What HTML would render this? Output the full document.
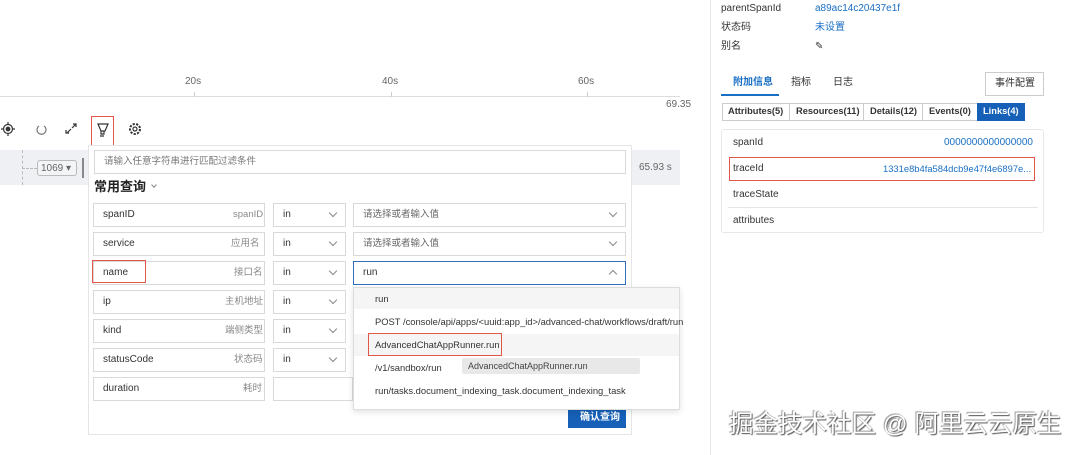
<!DOCTYPE html>
<html><head><meta charset="utf-8"><style>
*{box-sizing:border-box;margin:0;padding:0}
body{width:1080px;height:455px;position:relative;overflow:hidden;background:#fff;font-family:"Liberation Sans","Noto Sans CJK SC",sans-serif;font-size:10px;color:#333}
.a{position:absolute}
.t{position:absolute;white-space:nowrap;line-height:1}
.box{position:absolute;border:1px solid #d9d9d9;background:#fff}
.chev{position:absolute;width:6px;height:6px;border-right:1px solid #888;border-bottom:1px solid #888;transform:rotate(45deg)}
.blue{color:#1a6fc4}
.red{position:absolute;border:1.5px solid #e0574a}
.dd{font-size:9.4px}
</style></head><body>
<!-- timeline -->
<div class="a" style="left:0;top:96px;width:680px;height:1px;background:#ddd"></div>
<div class="a" style="left:194px;top:92px;width:1px;height:5px;background:#ccc"></div>
<div class="a" style="left:391px;top:92px;width:1px;height:5px;background:#ccc"></div>
<div class="a" style="left:587px;top:92px;width:1px;height:5px;background:#ccc"></div>
<div class="t" style="left:185px;top:77px;color:#666">20s</div>
<div class="t" style="left:382px;top:77px;color:#666">40s</div>
<div class="t" style="left:578px;top:77px;color:#666">60s</div>
<div class="t" style="left:666px;top:100px;color:#666">69.35</div>
<!-- icons -->
<svg class="a" style="left:0;top:120px" width="150" height="20" viewBox="0 0 150 20" fill="none" stroke="#333" stroke-width="1.2">
<circle cx="8" cy="9" r="4.5"/><circle cx="8" cy="9" r="1.8" fill="#333"/><path d="M8 2v2.5M8 13.5V16M1 9h2.5M12.5 9H15"/>
<path d="M44 6a4.5 4.5 0 1 1-5 0" stroke="#777"/>
<path d="M67 13l4-4M72 8l4-4M73 4h3v3M66 10v3h3"/>
<path d="M98 4h10l-3 7h-4z M101 11v3h3v-3 M100 16h4"/>
<circle cx="135" cy="9" r="2"/><circle cx="135" cy="9" r="5" stroke-dasharray="2.2 1.3" stroke-width="2"/>
</svg>
<div class="red" style="left:91px;top:116px;width:23px;height:31px"></div>
<!-- gray row -->
<div class="a" style="left:0;top:150px;width:680px;height:35px;background:#eef0f3"></div>
<div class="a" style="left:22px;top:150px;width:1px;height:35px;border-left:1px dashed #bbb"></div>
<div class="a" style="left:22px;top:168px;width:15px;height:1px;border-top:1px dashed #bbb"></div>
<div class="a" style="left:37px;top:160px;width:40px;height:16px;border:1px solid #bbb;border-radius:3px;background:#f3f4f6"></div>
<div class="t" style="left:41px;top:164px;color:#666">1069 ▾</div>
<div class="a" style="left:82px;top:158px;width:2px;height:20px;background:#888"></div>
<div class="t" style="left:639px;top:163px;color:#666">65.93 s</div>
<!-- popup -->
<div class="a" style="left:88px;top:145px;width:544px;height:290px;background:#fff;border:1px solid #e5e5e5"></div>
<div class="box" style="left:94px;top:150px;width:532px;height:24px"></div>
<div class="t" style="left:104px;top:157px;color:#777;font-size:9.5px">请输入任意字符串进行匹配过滤条件</div>
<div class="t" style="left:94px;top:180px;font-size:13px;font-weight:bold;color:#222">常用查询</div>
<div class="chev" style="left:152px;top:183px;width:4px;height:4px"></div>

<div class="box" style="left:93px;top:203px;width:172px;height:24px"></div><div class="t" style="left:103px;top:210px">spanID</div><div class="t" style="left:233px;top:210px;color:#888;font-size:9.5px">spanID</div>
<div class="box" style="left:93px;top:232px;width:172px;height:24px"></div><div class="t" style="left:103px;top:239px">service</div><div class="t" style="left:231px;top:239px;color:#888;font-size:9.5px">应用名</div>
<div class="box" style="left:93px;top:261px;width:172px;height:24px"></div><div class="t" style="left:103px;top:268px">name</div><div class="t" style="left:234px;top:268px;color:#888;font-size:9.5px">接口名</div>
<div class="box" style="left:93px;top:290px;width:172px;height:24px"></div><div class="t" style="left:225px;top:297px;color:#888;font-size:9.5px">主机地址</div><div class="t" style="left:103px;top:297px">ip</div>
<div class="box" style="left:93px;top:319px;width:172px;height:24px"></div><div class="t" style="left:225px;top:326px;color:#888;font-size:9.5px">端侧类型</div><div class="t" style="left:103px;top:326px">kind</div>
<div class="box" style="left:93px;top:348px;width:172px;height:24px"></div><div class="t" style="left:103px;top:355px">statusCode</div><div class="t" style="left:234px;top:355px;color:#888;font-size:9.5px">状态码</div>
<div class="box" style="left:93px;top:377px;width:172px;height:24px"></div><div class="t" style="left:103px;top:384px">duration</div><div class="t" style="left:243px;top:384px;color:#888;font-size:9.5px">耗时</div>
<div class="red" style="left:92px;top:260px;width:54px;height:23px"></div>

<div class="box" style="left:273px;top:203px;width:73px;height:24px"></div><div class="t" style="left:283px;top:210px">in</div><div class="chev" style="left:330px;top:210px"></div>
<div class="box" style="left:273px;top:232px;width:73px;height:24px"></div><div class="t" style="left:283px;top:239px">in</div><div class="chev" style="left:330px;top:239px"></div>
<div class="box" style="left:273px;top:261px;width:73px;height:24px"></div><div class="t" style="left:283px;top:268px">in</div><div class="chev" style="left:330px;top:268px"></div>
<div class="box" style="left:273px;top:290px;width:73px;height:24px"></div><div class="t" style="left:283px;top:297px">in</div><div class="chev" style="left:330px;top:297px"></div>
<div class="box" style="left:273px;top:319px;width:73px;height:24px"></div><div class="t" style="left:283px;top:326px">in</div><div class="chev" style="left:330px;top:326px"></div>
<div class="box" style="left:273px;top:348px;width:73px;height:24px"></div><div class="t" style="left:283px;top:355px">in</div><div class="chev" style="left:330px;top:355px"></div>
<div class="box" style="left:273px;top:377px;width:80px;height:24px"></div>

<div class="box" style="left:353px;top:203px;width:273px;height:24px"></div><div class="t" style="left:363px;top:210px;color:#666;font-size:9.5px">请选择或者输入值</div><div class="chev" style="left:610px;top:210px"></div>
<div class="box" style="left:353px;top:232px;width:273px;height:24px"></div><div class="t" style="left:363px;top:239px;color:#666;font-size:9.5px">请选择或者输入值</div><div class="chev" style="left:610px;top:239px"></div>
<div class="box" style="left:353px;top:261px;width:273px;height:24px;border-color:#2f6fc0"></div><div class="t" style="left:363px;top:268px">run</div><div class="chev" style="left:610px;top:271px;transform:rotate(225deg)"></div>

<div class="a" style="left:568px;top:407px;width:58px;height:21px;background:#1660b8"></div>
<div class="t" style="left:580px;top:413px;color:#fff;font-weight:bold">确认查询</div>
<!-- dropdown -->
<div class="a" style="left:353px;top:287px;width:327px;height:123px;background:#fff;border:1px solid #ddd;box-shadow:0 2px 6px rgba(0,0,0,.12)"></div>
<div class="a" style="left:354px;top:288px;width:325px;height:21px;background:#f5f5f5"></div>
<div class="a" style="left:354px;top:334px;width:325px;height:22px;background:#f5f5f5"></div>
<div class="t dd" style="left:375px;top:294px">run</div>
<div class="t dd" style="left:375px;top:317px">POST /console/api/apps/&lt;uuid:app_id&gt;/advanced-chat/workflows/draft/run</div>
<div class="t dd" style="left:375px;top:340px">AdvancedChatAppRunner.run</div>
<div class="red" style="left:368px;top:333px;width:134px;height:23px"></div>
<div class="t dd" style="left:375px;top:363px">/v1/sandbox/run</div>
<div class="t dd" style="left:375px;top:386px">run/tasks.document_indexing_task.document_indexing_task</div>
<div class="a" style="left:462px;top:358px;width:178px;height:16px;background:#e8e8e8;border-radius:2px"></div>
<div class="t" style="left:468px;top:362px;font-size:9px;color:#444">AdvancedChatAppRunner.run</div>

<!-- right panel -->
<div class="a" style="left:710px;top:0;width:1px;height:455px;background:#e5e5e5"></div>
<div class="t" style="left:721px;top:4px">parentSpanId</div><div class="t blue" style="left:815px;top:4px">a89ac14c20437e1f</div>
<div class="t" style="left:721px;top:23px">状态码</div><div class="t blue" style="left:815px;top:23px">未设置</div>
<div class="t" style="left:721px;top:42px">别名</div><div class="t" style="left:815px;top:42px">✎</div>
<div class="t blue" style="left:733px;top:78px;font-weight:bold">附加信息</div>
<div class="t" style="left:791px;top:78px">指标</div>
<div class="t" style="left:833px;top:78px">日志</div>
<div class="a" style="left:721px;top:94px;width:58px;height:2px;background:#1a6fc4"></div>
<div class="a" style="left:985px;top:72px;width:59px;height:24px;border:1px solid #ccc;background:#fff"></div>
<div class="t" style="left:995px;top:79px">事件配置</div>
<div class="a" style="left:722px;top:103px;width:303px;height:18px;border:1px solid #ccc;background:#fff"></div>
<div class="a" style="left:789px;top:103px;width:1px;height:18px;background:#ccc"></div>
<div class="a" style="left:863px;top:103px;width:1px;height:18px;background:#ccc"></div>
<div class="a" style="left:922px;top:103px;width:1px;height:18px;background:#ccc"></div>
<div class="a" style="left:977px;top:103px;width:48px;height:18px;background:#1660b8"></div>
<div class="t" style="left:728px;top:107px;font-weight:bold;font-size:9.3px">Attributes(5)</div>
<div class="t" style="left:796px;top:107px;font-weight:bold;font-size:9.3px">Resources(11)</div>
<div class="t" style="left:870px;top:107px;font-weight:bold;font-size:9.3px">Details(12)</div>
<div class="t" style="left:929px;top:107px;font-weight:bold;font-size:9.3px">Events(0)</div>
<div class="t" style="left:983px;top:107px;font-weight:bold;color:#fff;font-size:9.3px">Links(4)</div>
<div class="a" style="left:721px;top:129px;width:323px;height:104px;border:1px solid #e8e8e8;border-radius:3px"></div>
<div class="t" style="left:733px;top:138px">spanId</div><div class="t blue" style="left:944px;top:138px">0000000000000000</div>
<div class="t" style="left:733px;top:164px">traceId</div><div class="t blue" style="left:883px;top:164px;font-size:9.4px">1331e8b4fa584dcb9e47f4e6897e...</div>
<div class="red" style="left:729px;top:157px;width:306px;height:24px"></div>
<div class="t" style="left:733px;top:190px">traceState</div>
<div class="a" style="left:728px;top:207px;width:310px;height:1px;background:#e5e5e5"></div>
<div class="t" style="left:733px;top:216px">attributes</div>
<div class="t" style="left:729px;top:413px;font-size:24.5px;color:#fff;text-shadow:1px 1px 1px #555,-1px -1px 1px #999">掘金技术社区 @ 阿里云云原生</div>
</body></html>
